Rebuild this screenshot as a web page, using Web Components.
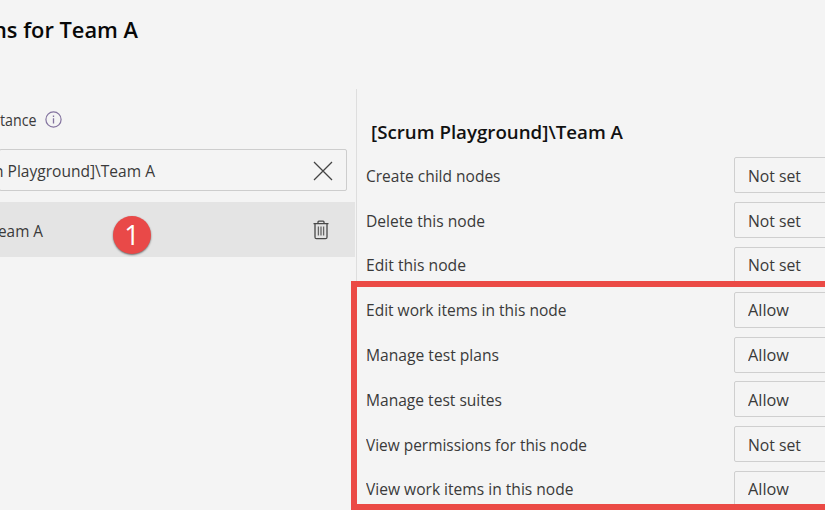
<!DOCTYPE html>
<html lang="en"><head><meta charset="utf-8"><title>Permissions for Team A</title>
<style>html,body{margin:0;background:#f4f4f4;overflow:hidden}body{width:825px;height:510px}</style></head>
<body><permissions-page></permissions-page>
<script>
const define=(name,html,setup)=>customElements.define(name,class extends HTMLElement{
  connectedCallback(){
    if(this.shadowRoot)return;
    this.attachShadow({mode:'open'}).innerHTML=html;
    if(setup)setup(this,this.shadowRoot);
  }
});

/* Single line label condensed or widened to the advance given in its w attribute. */
define('fit-text',`<style>:host{display:block;white-space:nowrap;line-height:24px;height:24px}span{display:inline-block;transform-origin:0 50%}</style><span><slot></slot></span>`,(el,root)=>{
  const w=+el.getAttribute('w'),s=root.querySelector('span');
  el.style.width=w+'px';
  const n=s.getBoundingClientRect().width;
  if(w&&n)s.style.transform=`scaleX(${w/n})`;
});

define('info-icon',`<style>:host{display:block;width:17px;height:17px}svg{display:block}</style>
<svg width="17" height="17" viewBox="0 0 17 17" fill="none" stroke="#83739f"><circle cx="8.5" cy="8.5" r="7.6" stroke-width="1.2"/><path d="M8.5 7.2v5.3M8.5 4.5v1.4" stroke-width="1.3"/></svg>`);

define('close-icon',`<style>:host{display:block;width:20px;height:20px}svg{display:block}</style>
<svg width="20" height="20" viewBox="0 0 20 20" stroke="#444" stroke-width="1.25"><path d="M1 1 19 19M19 1 1 19"/></svg>`);

define('trash-icon',`<style>:host{display:block;width:16px;height:20px}svg{display:block}</style>
<svg width="16" height="20" viewBox="0 0 16 20" fill="none" stroke="#484848" stroke-width="1.3"><path d="M.5 3.6h15M5 3.4V2q0-.9.9-.9h4.2q.9 0 .9.9v1.4M2 3.8v13.4q0 1.5 1.5 1.5h9q1.5 0 1.5-1.5V3.8"/><path d="M5.4 6.4v9M8 6.4v9M10.6 6.4v9" stroke="#666"/></svg>`);

define('search-field',`<style>:host{display:flex;align-items:center;justify-content:space-between;box-sizing:border-box;width:348px;height:42px;margin-left:-1px;border:1px solid #cdcdcd;border-radius:2px;padding:2px 13px 0 0}.t{margin-left:-6px}</style>
<div class="t"><slot></slot></div><close-icon></close-icon>`);

define('identity-row',`<style>:host{display:flex;align-items:center;justify-content:space-between;box-sizing:border-box;width:355px;height:55px;padding:1px 26px 0 0;background:#e4e4e4}.t{margin-left:-2px;padding-top:2px}</style>
<div class="t"><slot></slot></div><trash-icon></trash-icon>`);

define('number-badge',`<style>:host{position:absolute;left:113px;top:216px;width:38px;height:38px;border-radius:50%;background:#e94948;box-shadow:0 1px 2px #0008;color:#fff;font:27px/37px "Open Sans",sans-serif;text-align:center}</style><slot></slot>`);

define('permission-select',`<style>:host{display:block;box-sizing:border-box;width:109px;height:36px;border:1px solid #cfcfcf;border-radius:2px;padding:5.4px 0 0 13px}</style><slot></slot>`);

define('permission-row',`<style>:host{display:flex;height:44.8px;justify-content:space-between}.label{padding-top:6.4px}</style><div class="label"><slot></slot></div><permission-select><slot name="value"></slot></permission-select>`);

define('highlight-frame',`<style>:host{position:absolute;box-sizing:border-box;left:350.6px;top:280.6px;width:490px;height:229.4px;border:6.3px solid #eb4a45}</style>`);

const rows=[['Create child nodes',134.5,0],['Delete this node',119,0],['Edit this node',100,0],['Edit work items in this node',200.5,1],['Manage test plans',133,1],['Manage test suites',136,1],['View permissions for this node',221,0],['View work items in this node',207.5,1]];

define('permissions-page',`<style>
:host{display:flex;position:relative;width:825px;height:510px;overflow:hidden;background:#f4f4f4;color:#3a3a3a;font:400 16.4px "Open Sans","Noto Sans",sans-serif}
.left{width:356px;flex:none}
.title{font-size:22px;font-weight:600;color:#080808;margin:17px 0 0 -7px}
.legend{display:flex;gap:8px;align-items:center;margin-top:67px}
info-icon{margin-top:-1px}
search-field{margin-top:17px}
identity-row{margin-top:11px}
.right{box-sizing:border-box;width:485px;flex:none;margin-top:89px;border-left:1px solid #dedede;padding:31px 0 0 9px}
.heading{font-size:18px;font-weight:600;color:#111;margin:0 0 13.4px 5px}
</style>
<div class="left">
<fit-text class="title" w="145">ns for Team A</fit-text>
<div class="legend"><fit-text w="36.5">tance</fit-text><info-icon></info-icon></div>
<search-field><fit-text w="161">n Playground]\\Team A</fit-text></search-field>
<identity-row><fit-text w="45">eam A</fit-text></identity-row>
</div>
<div class="right"><fit-text class="heading" w="252">[Scrum Playground]\\Team A</fit-text>
${rows.map(([t,w,a])=>`<permission-row style="width:477px"><fit-text w="${w}">${t}</fit-text><fit-text slot="value" w="${a?41:53}">${a?'Allow':'Not set'}</fit-text></permission-row>`).join('')}
</div>
<number-badge>1</number-badge><highlight-frame></highlight-frame>`);
</script></body></html>
